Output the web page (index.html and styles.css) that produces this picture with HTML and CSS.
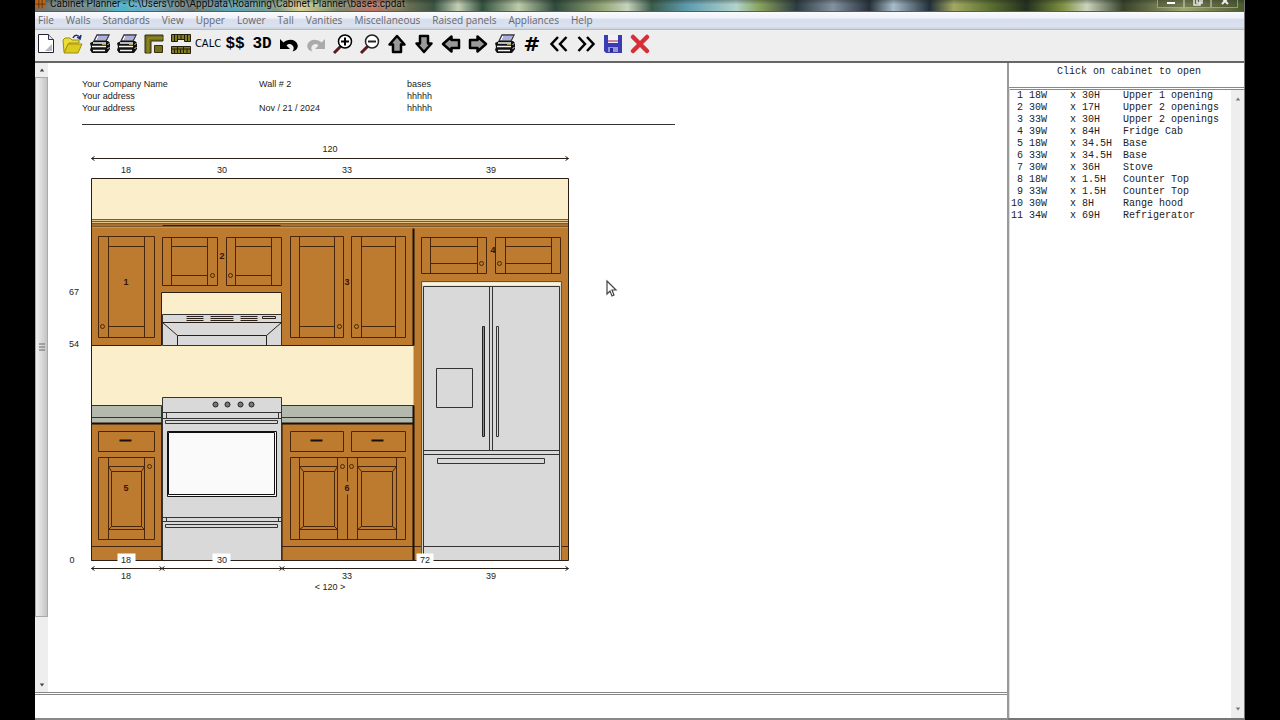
FILE: index.html
```html
<!DOCTYPE html>
<html lang="en">
<head>
<meta charset="utf-8">
<title>Cabinet Planner</title>
<link rel="stylesheet" href="styles.css">
</head>
<body>
<svg class="defs" aria-hidden="true">
  <symbol id="printer" viewBox="0 0 22 22">
    <path d="M5 8 8 2h12l-3 6z" fill="#fff" stroke="#334" stroke-width="1.300"/>
    <path d="M9 4h9M8 6h9" stroke="#5a62b4" stroke-width="1"/>
    <path d="M1 10l4-2h14l2 2v6l-3 4H3l-2-3 1-3z" fill="#111"/>
    <path d="M4 10h13M3 13.500h14M4 17.500h12" stroke="#f4f4f4" stroke-width="1.700"/>
    <path d="M18.500 12l2-2M18.500 16l2-2" stroke="#ddd"/>
    <path d="M13 11.500h4" stroke="#a8a83c"/>
  </symbol>
  <symbol id="arrow" viewBox="0 0 22 22">
    <path d="M11 3l7.500 8.500H15V19H7v-7.500H3.500z" fill="#999" stroke="#000" stroke-width="2.500" stroke-linejoin="round"/>
  </symbol>
</svg>
<div class="window">
  <header class="titlebar">
    <svg class="app-icon" viewBox="0 0 12 12"><path fill="#b5651d" d="M0 0h12v10H0z"/><path d="M4 0v10M8 0v10M0 5h12" stroke="#5c2c0a"/></svg>
    <h1 class="title">Cabinet Planner - C:\Users\rob\AppData\Roaming\Cabinet Planner\bases.cpdat</h1>
    <div class="caption-buttons">
      <button class="caption" aria-label="Minimize"><svg viewBox="0 0 12 8"><path d="M2 3h8" stroke="#fff" stroke-width="2"/></svg></button>
      <button class="caption" aria-label="Restore"><svg viewBox="0 0 12 8"><path d="M2 0v5h6V0M5 0v3h5V0" fill="none" stroke="#e8e8e8" stroke-width="1.500"/></svg></button>
      <button class="caption" aria-label="Close"><svg viewBox="0 0 12 8"><path d="M3-2l6 6M9-2L3 4" stroke="#eee" stroke-width="2"/></svg></button>
    </div>
  </header>

  <nav class="menubar" aria-label="Main menu">
    <button>File</button><button>Walls</button><button>Standards</button><button>View</button><button>Upper</button><button>Lower</button><button>Tall</button><button>Vanities</button><button>Miscellaneous</button><button>Raised panels</button><button>Appliances</button><button>Help</button>
  </nav>

  <div class="toolbar" role="toolbar" aria-label="Tools">
    <button aria-label="New"><svg viewBox="0 0 22 22"><path d="M3.500 1.500h10l5 5v13h-15z" fill="#fff" stroke="#223"/><path d="M13.500 1.500v5h5" fill="#dde" stroke="#334"/><path d="M17 11v7h-7z" fill="#b5b8bd"/></svg></button>
    <button aria-label="Open"><svg viewBox="0 0 22 22"><path d="M1 7l2-2h5l2 2h7v3H7l-4 9H2z" fill="#e8e034" stroke="#9a8a1a"/><path d="M2 20L6 11h14l-4 9z" fill="#dccb1c" stroke="#a08c18"/><path d="M11 5c2-4 6-3 7 0M15 4l3 2 1-4" fill="none" stroke="#1c2c70" stroke-width="1.500"/></svg></button>
    <button aria-label="Print"><svg><use href="#printer"/></svg></button>
    <button aria-label="Print all"><svg><use href="#printer"/></svg></button>
    <button aria-label="Floor plan"><svg viewBox="0 0 22 22"><path d="M2 2h18v6H8v12H2z" fill="#76701c" stroke="#33300c"/><path d="M5 5h15M5 5v15" stroke="#9a9330"/><path d="M11.500 12.500h8v7h-8z" fill="#76701c" stroke="#33300c"/></svg></button>
    <button aria-label="Elevation"><svg viewBox="0 0 22 22"><path d="M1.500 1.500h6v7h-6zm6 0h7v5h-7zm7 0h6v7h-6zM1.500 13.500h6v7h-6zm6 0h6v7h-6zm6 0h7v7h-7z" fill="#817c22" stroke="#222008"/><path d="M4.500 2v6M11 2v4M17.500 2v6M2 16h18M4.500 16v4M10.500 16v4M17 16v4" stroke="#222008"/></svg></button>
    <button class="calc">CALC</button>
    <button class="glyph">$$</button>
    <button class="glyph">3D</button>
    <button aria-label="Undo"><svg viewBox="0 0 22 22"><path d="M2 6v10h10l-3.500-3.500c3-3 6-1 7 1.500 .5 1.500 0 3-1 4.500 4-1 6-4 5-7C18 6 10 5 5.500 9.500z" fill="#000"/></svg></button>
    <button aria-label="Redo"><svg viewBox="0 0 22 22"><path d="M20 6v10H10l3.500-3.500c-3-3-6-1-7 1.500-.5 1.500 0 3 1 4.500-4-1-6-4-5-7C4 6 12 5 16.500 9.500z" fill="#aaa"/></svg></button>
    <button aria-label="Zoom in"><svg viewBox="0 0 22 22"><path d="M8.500 13.500L2 20" stroke="#5a1a24" stroke-width="3"/><circle cx="13" cy="8.500" r="6.500" fill="#fff" stroke="#000" stroke-width="1.500"/><path d="M9 8.500h8M13 4.500v8" stroke="#000" stroke-width="2"/></svg></button>
    <button aria-label="Zoom out"><svg viewBox="0 0 22 22"><path d="M8.500 13.500L2 20" stroke="#5a1a24" stroke-width="3"/><circle cx="13" cy="8.500" r="6.500" fill="#fff" stroke="#222" stroke-width="1.500"/><path d="M9 8.500h8" stroke="#222" stroke-width="2"/></svg></button>
    <button aria-label="Up"><svg><use href="#arrow"/></svg></button>
    <button aria-label="Down"><svg class="down"><use href="#arrow"/></svg></button>
    <button aria-label="Left"><svg class="left"><use href="#arrow"/></svg></button>
    <button aria-label="Right"><svg class="right"><use href="#arrow"/></svg></button>
    <button aria-label="Print list"><svg><use href="#printer"/></svg></button>
    <button class="glyph hash">#</button>
    <button aria-label="Previous wall"><svg viewBox="0 0 22 22"><path d="M10 4l-6.500 7L10 18M18.500 4L12 11l6.500 7" fill="none" stroke="#000" stroke-width="2.500"/></svg></button>
    <button aria-label="Next wall"><svg viewBox="0 0 22 22"><path d="M12 4l6.500 7L12 18M3.500 4L10 11l-6.500 7" fill="none" stroke="#000" stroke-width="2.500"/></svg></button>
    <button aria-label="Save"><svg viewBox="0 0 22 22"><path d="M2 2h18v18H4l-2-2z" fill="#3b3bb4"/><path d="M6 2h10v8H6z" fill="#f2f0fa"/><path d="M6 8h10" stroke="#c06080" stroke-width="1.500"/><path d="M6 14h10v5H6z" fill="#8f95d8"/><path d="M8 15h3v4H8z" fill="#2c2c90"/></svg></button>
    <button aria-label="Delete"><svg viewBox="0 0 22 22"><path d="M4 4l14 14M18 4L4 18" stroke="#d62f38" stroke-width="4.500" stroke-linecap="round"/></svg></button>
  </div>

  <div class="work">
    <div class="left-side">
      <div class="sheet-row">
        <div class="scrollbar">
          <button aria-label="Scroll up"><svg viewBox="0 0 8 8"><path d="M1 6l3-4 3 4z"/></svg></button>
          <div class="thumb"><svg viewBox="0 0 6 8"><path d="M0 1h6M0 4h6M0 7h6" stroke="#666"/></svg></div>
          <button aria-label="Scroll down"><svg viewBox="0 0 8 8"><path d="M1 2l3 4 3-4z"/></svg></button>
        </div>
        <main class="sheet">
          <div class="job">
            <span>Your Company Name</span><span>Wall # 2</span><span>bases</span>
            <span>Your address</span><span></span><span>hhhhh</span>
            <span>Your address</span><span>Nov / 21 / 2024</span><span>hhhhh</span>
          </div>
          <svg class="elevation" viewBox="60 135 580 465" role="img" aria-label="Wall elevation with cabinets">
            <g transform="translate(.5 .5)">
              <!-- wall and carcasses -->
              <path class="cream" d="M91 178h477v382H91z"/>
              <path fill="#e5c48e" d="M91 219h477v4H91z"/>
              <path fill="#a9702e" d="M91 223h477v4H91z"/>
              <path class="wood bare" d="M91 227h477v333H413V345H281V292H161v53H91z"/>
              <path class="soft" d="M91 219h477M91 221h477M91 223h477M91 226h477"/>
              <path class="ink" d="M91 345h70V292h120v53h132"/>
              <path class="ink heavy" d="M413 228v117"/>
              <path class="ink" d="M162 225h118"/>
              <!-- upper doors -->
              <g class="wood">
                <path d="M98 236h56v101H98zM108 236v101M144 236v101M108 246h36M108 326h36"/>
                <path d="M162 237h55v48h-55zM171 237v48M207 237v48M171 246h36M171 275h36"/>
                <path d="M226 237h55v48h-55zM235 237v48M271 237v48M235 246h36M235 275h36"/>
                <path d="M290 236h53v101h-53zM299 236v101M334 236v101M299 246h35M299 326h35"/>
                <path d="M351 236h54v101h-54zM361 236v101M395 236v101M361 246h34M361 326h34"/>
                <path d="M421 237h65v36h-65zM430 237v36M477 237v36M430 246h47M430 263h47"/>
                <path d="M495 237h65v36h-65zM505 237v36M551 237v36M505 246h46M505 263h46"/>
              </g>
              <g class="knob">
                <circle cx="102" cy="326" r="2"/><circle cx="212" cy="275" r="2"/><circle cx="230" cy="275" r="2"/>
                <circle cx="339" cy="326" r="2"/><circle cx="356" cy="326" r="2"/><circle cx="481" cy="263" r="2"/><circle cx="499" cy="263" r="2"/>
              </g>
              <!-- range hood -->
              <path class="steel" d="M162 314h119v31H162z"/>
              <path class="ink" d="M162 322h119M162 322l15 13M281 322l-15 13M177 345v-10h89v10"/>
              <path class="ink" d="M186 316h17M186 318h17M186 320h17M210 316h23M210 318h23M210 320h23M240 316h17M240 318h17M240 320h17M262 316h13v2h-13z"/>
              <!-- base cabinets -->
              <path class="wood" d="M91 423h70v137H91zM281 423h132v137H281zM91 546h70M281 546h132M413 546h155"/>
              <path class="counter" d="M91 405h70v18H91zM281 405h132v18H281zM91 417h70M281 417h132"/>
              <path class="ink heavy" d="M91 423h70M281 423h132M281 423v137M413 405v155"/>
              <g class="wood">
                <path d="M98 431h56v20H98zM290 431h53v20h-53zM351 431h54v20h-54z"/>
                <path d="M98 457h56v82H98zM108 457v82M144 457v82M108 466h36M108 529h36M111 471h30v55h-30zM108 466l3 5M144 466l-3 5M108 529l3-3M144 529l-3-3"/>
                <path d="M290 457h115v82H290zM299 457v82M337 457v82M357 457v82M396 457v82M347 457v24M347 494v45"/>
                <path d="M299 466h38M299 529h38M303 471h31v55h-31zM299 466l4 5M337 466l-3 5M299 529l4-3M337 529l-3-3"/>
                <path d="M357 466h39M357 529h39M361 471h31v55h-31zM357 466l4 5M396 466l-4 5M357 529l4-3M396 529l-4-3"/>
              </g>
              <path class="ink heavy" d="M119 440h12M310 440h12M371 440h12"/>
              <g class="knob"><circle cx="149" cy="466" r="2"/><circle cx="342" cy="466" r="2"/><circle cx="351" cy="466" r="2"/></g>
              <!-- stove -->
              <path class="steel" d="M162 397h119v163H162zM162 412h119M162 418h119M166 412v6M278 412v6M165 420h112v3H165zM162 517h119M162 521h119M166 517v4M278 517v4M165 524h112v3H165z"/>
              <path fill="#fafafa" stroke="#111" d="M167 431h109v65H167zM168 432h106v62H168z"/>
              <g fill="#777" stroke="#222"><circle cx="215" cy="404" r="2.500"/><circle cx="227" cy="404" r="2.500"/><circle cx="240" cy="404" r="2.500"/><circle cx="251" cy="404" r="2.500"/></g>
              <!-- refrigerator -->
              <path fill="#d2cfc4" stroke="#555" d="M421 281h140v279H421z"/>
              <path fill="#fbf3dc" d="M422 282h138v3H422z"/>
              <path class="steel" d="M423 286h136v274H423zM489 286v164M492 286v164M423 450h136M423 454h136M423 546h136M436 368h36v39h-36zM437 458h107v5H437zM496 326h2v110h-2z"/>
              <path fill="#888" stroke="#222" d="M482 326h2v110h-2z"/>
              <path class="ink" d="M91 178h477v382H91z"/>
              <!-- dimension lines -->
              <path class="ink" d="M91 158h477M91 568h477"/>
              <path class="arrowhead" d="M94 156l-3 2 3 2M565 156l3 2-3 2M94 566l-3 2 3 2M565 566l3 2-3 2M159 566l5 4M159 570l5-4M279 566l5 4M279 570l5-4"/>
              <path fill="#fff" d="M117 553h18v13h-18zM212 553h18v13h-18zM416 553h17v13h-17z"/>
            </g>
            <g class="dims">
              <text x="330" y="152">120</text>
              <text x="126" y="173">18</text><text x="222" y="173">30</text><text x="347" y="173">33</text><text x="491" y="173">39</text>
              <text x="74" y="295">67</text><text x="74" y="347">54</text><text x="72" y="563">0</text>
              <text x="126" y="563">18</text><text x="222" y="563">30</text><text x="425" y="563">72</text>
              <text x="126" y="579">18</text><text x="347" y="579">33</text><text x="491" y="579">39</text>
              <text x="330" y="590">&lt; 120 &gt;</text>
            </g>
            <g class="marks">
              <text x="126" y="285">1</text><text x="222" y="259">2</text><text x="347" y="285">3</text><text x="493" y="253">4</text><text x="126" y="491">5</text><text x="347" y="491">6</text>
            </g>
            <path d="M607 281v13l3-3 2 5 2-1-2-5h4z" fill="#fff" stroke="#444" stroke-width="1.200"/>
          </svg>
        </main>
      </div>
      <div class="status"></div>
    </div>

    <aside class="right-side">
      <h2 class="hint">Click on cabinet to open</h2>
      <div class="list-row">
        <table class="cabinets">
          <tbody>
            <tr><td>1</td><td>18W</td><td>x</td><td>30H</td><td>Upper 1 opening</td></tr>
            <tr><td>2</td><td>30W</td><td>x</td><td>17H</td><td>Upper 2 openings</td></tr>
            <tr><td>3</td><td>33W</td><td>x</td><td>30H</td><td>Upper 2 openings</td></tr>
            <tr><td>4</td><td>39W</td><td>x</td><td>84H</td><td>Fridge Cab</td></tr>
            <tr><td>5</td><td>18W</td><td>x</td><td>34.5H</td><td>Base</td></tr>
            <tr><td>6</td><td>33W</td><td>x</td><td>34.5H</td><td>Base</td></tr>
            <tr><td>7</td><td>30W</td><td>x</td><td>36H</td><td>Stove</td></tr>
            <tr><td>8</td><td>18W</td><td>x</td><td>1.5H</td><td>Counter Top</td></tr>
            <tr><td>9</td><td>33W</td><td>x</td><td>1.5H</td><td>Counter Top</td></tr>
            <tr><td>10</td><td>30W</td><td>x</td><td>8H</td><td>Range hood</td></tr>
            <tr><td>11</td><td>34W</td><td>x</td><td>69H</td><td>Refrigerator</td></tr>
          </tbody>
        </table>
        <div class="scrollbar idle">
          <button aria-label="Scroll list up"><svg viewBox="0 0 8 8"><path d="M1 6l3-4 3 4z"/></svg></button>
          <button aria-label="Scroll list down"><svg viewBox="0 0 8 8"><path d="M1 2l3 4 3-4z"/></svg></button>
        </div>
      </div>
    </aside>
  </div>
</div>
</body>
</html>
```

FILE: styles.css
```css
* { box-sizing: border-box; }

body {
  margin: 0;
  background: #000;
  font-family: "Liberation Sans", Arial, sans-serif;
  font-size: 9px;
  color: #222;
}

button {
  margin: 0;
  padding: 0;
  border: 0;
  background: none;
  font: inherit;
  color: inherit;
}

svg { display: block; }

.defs { position: absolute; width: 0; height: 0; }

.window {
  display: flex;
  flex-direction: column;
  height: 100vh;
  margin: 0 35px;
  border-right: 1px solid #777;
  background: #fff;
  overflow: hidden;
}

/* title bar */
.titlebar {
  display: flex;
  flex: none;
  align-items: flex-start;
  gap: 4px;
  height: 12px;
  border-bottom: 1px solid #555d58;
  background:
    linear-gradient(180deg, rgba(20, 30, 25, .35), transparent 40%),
    linear-gradient(90deg, #6b7470 0, #708a8c 5%, #4fb4c8 7%, #72a4ba 10%, #66756f 13%, #5aa0b8 16%, #7b9a86 20%, #d9cf90 22%, #7b8a68 25%, #bc6f62 28%, #7d7a58 30%, #3b5544 33%, #c3cfb4 35%, #33503e 37%, #bccba8 40%, #2f4a3c 43%, #96a778 47%, #c6d3bc 49%, #3b5c4c 51%, #5f9cae 54%, #b3d3cc 58%, #87a05a 60%, #2d3b42 63%, #8492a0 66%, #26313a 69%, #a8bccb 71%, #23313a 74%, #a3a862 76%, #5c7033 79%, #23301d 82%, #7e9042 85%, #cad3bb 87%, #374229 90%, #9fa56f 95%, #4b5a2c 100%);
}
.app-icon { width: 11px; height: 10px; }
.title {
  flex: 1;
  margin: 0;
  font: 10px/8px Roboto, "Noto Sans", sans-serif;
  color: #0c0c0c;
  white-space: nowrap;
  text-shadow: 0 0 5px rgba(255, 255, 255, .6);
}
.caption-buttons { display: flex; padding-right: 6px; }
.caption {
  display: flex;
  justify-content: center;
  width: 27px;
  height: 8px;
  border: 1px solid rgba(230, 235, 210, .45);
  border-top: 0;
  background: rgba(70, 80, 50, .5);
}
.caption svg { width: 12px; height: 8px; }

/* menu */
.menubar {
  display: flex;
  flex: none;
  gap: 12px;
  height: 18px;
  padding-left: 3px;
  border-bottom: 1px solid #b9bdc2;
  background: linear-gradient(#fafbfd 0, #eef1f8 35%, #d7deec 45%, #dbe1ef 85%, #ccd2da 100%);
  font: 10px/17px "Open Sans", "Noto Sans", sans-serif;
  color: #66686e;
}

/* toolbar */
.toolbar {
  display: flex;
  flex: none;
  align-items: center;
  gap: 5px;
  height: 33px;
  padding-bottom: 4px;
  border-bottom: 2px solid #666;
  background: #eee;
  color: #000;
}
.toolbar button {
  display: flex;
  flex: none;
  justify-content: center;
  align-items: center;
  width: 22px;
  height: 22px;
}
.toolbar svg { flex: none; width: 22px; height: 22px; }
.down { transform: rotate(180deg); }
.left { transform: rotate(270deg); }
.right { transform: rotate(90deg); }
.toolbar .calc { font: 11px "Liberation Sans Narrow", "DejaVu Sans Condensed", sans-serif; }
.toolbar .glyph { font: bold 16px "Liberation Mono", monospace; }
.toolbar .hash { font: bold 20px "DejaVu Sans", sans-serif; }

/* work area */
.work { display: flex; flex: 1; min-height: 0; }
.left-side { display: flex; flex: 1; flex-direction: column; min-width: 0; }
.sheet-row { display: flex; flex: 1; min-height: 0; }
.status {
  flex: none;
  height: 28px;
  border-top: 3px double #888;
  border-bottom: 2px solid #888;
}

.scrollbar {
  display: flex;
  flex: none;
  flex-direction: column;
  justify-content: space-between;
  width: 13px;
  background: #eee;
}
.scrollbar button {
  display: flex;
  flex: none;
  justify-content: center;
  align-items: center;
  height: 14px;
}
.scrollbar button svg { width: 8px; height: 6px; fill: #444; }
.thumb {
  display: flex;
  justify-content: center;
  align-items: center;
  height: 540px;
  margin-bottom: auto;
  border: 1px solid #aaa;
  background: linear-gradient(90deg, #f0f0f0, #c4c4c4);
}
.thumb svg { width: 6px; height: 8px; }
.idle button svg { fill: #777; }
.idle button { height: 18px; }

.sheet { flex: 1; min-width: 0; padding: 15px 12px 0; }
.job {
  display: grid;
  grid-template-columns: 177px 148px 1fr;
  grid-auto-rows: 12px;
  width: 593px;
  margin-left: 22px;
  padding-bottom: 10px;
  border-bottom: 1px solid #333;
  line-height: 12px;
}
.elevation { width: 580px; height: 465px; margin-top: 10px; }

/* elevation drawing */
.cream { fill: #fbeecb; }
.wood { fill: #bd7b2f; stroke: #48260c; stroke-width: 1; }
.bare { stroke: none; }
.steel { fill: #d9d9d9; stroke: #333; }
.counter { fill: #b4b9ad; stroke: #333; }
.ink { fill: none; stroke: #2a2018; }
.heavy { stroke: #181008; stroke-width: 2; }
.soft { fill: none; stroke: #7c5a30; }
.knob { fill: none; stroke: #48260c; }
.arrowhead { fill: none; stroke: #222; }
.dims { fill: #222; font-size: 9px; text-anchor: middle; }
.marks { fill: #3a1208; font-size: 9px; font-weight: bold; text-anchor: middle; }

/* cabinet list */
.right-side {
  display: flex;
  flex: none;
  flex-direction: column;
  width: 237px;
  border-left: 2px solid #999;
  border-bottom: 2px solid #777;
  font-family: "Liberation Mono", "Courier New", monospace;
  font-size: 10px;
}
.hint {
  flex: none;
  height: 24px;
  margin: 0;
  padding-left: 5px;
  font-size: 10px;
  font-weight: normal;
  line-height: 18px;
  text-align: center;
}
.list-row {
  display: flex;
  flex: 1;
  align-items: flex-start;
  justify-content: space-between;
  min-height: 0;
  border-top: 3px double #888;
  border-left: 1px solid #ddd;
}
.list-row .scrollbar { align-self: stretch; }
.cabinets { border-collapse: collapse; line-height: 12px; white-space: nowrap; }
.cabinets td { padding: 0; }
.cabinets td:nth-child(1) { width: 13px; text-align: right; }
.cabinets td:nth-child(2) { width: 47px; padding-left: 6px; }
.cabinets td:nth-child(3) { width: 12px; }
.cabinets td:nth-child(4) { width: 41px; }
```
